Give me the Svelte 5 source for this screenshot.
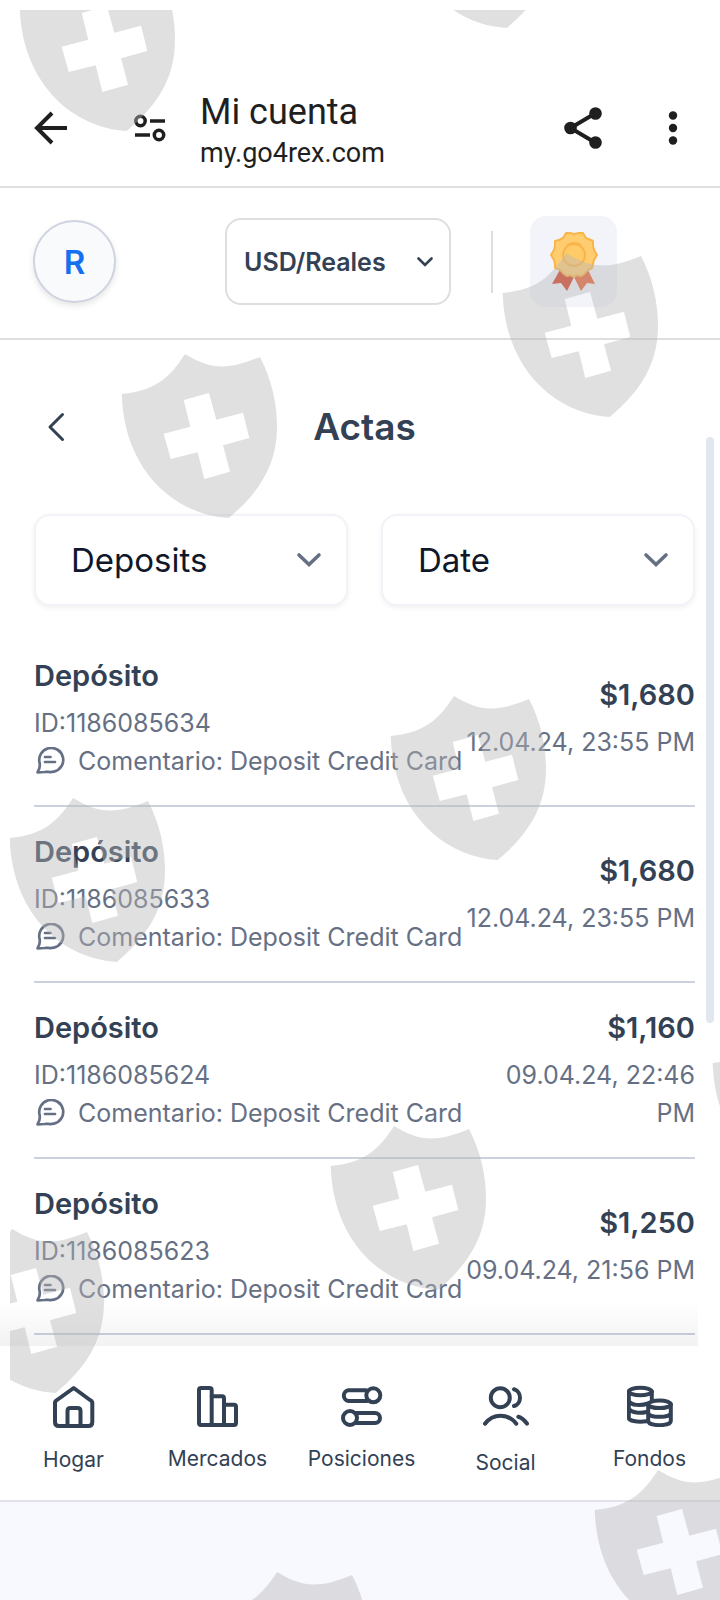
<script>
  let currency = "USD/Reales";
  let type = "Deposits";
  let sortBy = "Date";

  let deposits = [
    { id: "1186085634", amount: "$1,680", date: "12.04.24, 23:55 PM" },
    { id: "1186085633", amount: "$1,680", date: "12.04.24, 23:55 PM" },
    { id: "1186085624", amount: "$1,160", date: "09.04.24, 22:46 PM" },
    { id: "1186085623", amount: "$1,250", date: "09.04.24, 21:56 PM" },
  ];

  // shield positions on the overlay
  const shields = [
    [18, -37], [398, -140], [120, 350], [501, 249], [389, 692], [8, 794],
    [329, 1122], [711, 1019], [-53, 1225], [593, 1466], [212, 1568],
  ];
</script>

<div class="page">
  <header class="browserBar">
    <div class="barGroup">
      <button aria-label="Atrás">
        <svg width="34" height="34" viewBox="0 0 34 34" fill="none" stroke="#1f1f1f" stroke-width="4">
          <path d="M33 17H3M18 2L3 17L18 32" />
        </svg>
      </button>
      <button aria-label="Información del sitio">
        <svg width="34" height="30" viewBox="0 0 34 30" fill="none" stroke="#1f1f1f" stroke-width="3.500">
          <circle cx="6.500" cy="8" r="4.700" />
          <circle cx="25" cy="22" r="4.700" />
          <path d="M16 8H31M1 22H16" />
        </svg>
      </button>
    </div>
    <div class="site">
      <p class="siteTitle">Mi cuenta</p>
      <p class="siteUrl">my.go4rex.com</p>
    </div>
    <div class="barGroup">
      <button aria-label="Compartir">
        <svg width="38" height="42" viewBox="0 0 38 42" fill="#1f1f1f">
          <path d="M31 6.500L6.500 21L31 35.500" fill="none" stroke="#1f1f1f" stroke-width="4" />
          <circle cx="6.500" cy="21" r="6.300" />
          <circle cx="31.500" cy="6.500" r="6.300" />
          <circle cx="31.500" cy="35.500" r="6.300" />
        </svg>
      </button>
      <button aria-label="Más opciones">
        <svg width="10" height="34" viewBox="0 0 10 34" fill="#1f1f1f">
          <circle cx="5" cy="4.500" r="4.200" />
          <circle cx="5" cy="17" r="4.200" />
          <circle cx="5" cy="29.500" r="4.200" />
        </svg>
      </button>
    </div>
  </header>

  <div class="accountBar">
    <button class="avatar">R</button>
    <div class="selectBox currency">
      <select bind:value={currency} aria-label="Moneda">
        <option>USD/Reales</option>
      </select>
      <svg width="16" height="10" viewBox="0 0 16 10" fill="none" stroke="#334155" stroke-width="2.600">
        <path d="M1.500 1.500L8 8L14.500 1.500" stroke-linecap="round" />
      </svg>
    </div>
    <span class="separator"></span>
    <button class="medal" aria-label="Premios">
      <svg width="48" height="60" viewBox="0 0 48 60">
        <path d="M11 36L2 52L11 51L17 59L24 45Z" fill="#d63a1e" />
        <path d="M37 36L45 52L37 51L31 59L24 45Z" fill="#eb6034" />
        <path
          d="M24 2L29 1L33 1L36 6L41 8L43 9L43 14L44 18L47 23L44 28L43 32L42 36L38 38L34 42L31 44L27 43L24 45L20 43L17 44L14 42L10 38L5 36L5 32L4 28L1 23L4 18L5 14L5 9L9 8L13 6L16 1L20 1Z"
          fill="#ffcd70" stroke="#f9b548" stroke-width="2" stroke-linejoin="round" />
        <circle cx="24" cy="23" r="11" fill="#ffca68" stroke="#f9b548" stroke-width="2" />
        <path d="M17 13Q24 9 31 13" fill="none" stroke="#f9b548" stroke-width="2" />
      </svg>
    </button>
  </div>

  <main>
    <div class="titleRow">
      <button aria-label="Volver">
        <svg width="18" height="30" viewBox="0 0 18 30" fill="none" stroke="#334155" stroke-width="3">
          <path d="M15.500 2.500L3 15L15.500 27.500" stroke-linecap="round" stroke-linejoin="round" />
        </svg>
      </button>
      <h1>Actas</h1>
    </div>

    <div class="filters">
      <div class="selectBox filter">
        <select bind:value={type} aria-label="Tipo">
          <option>Deposits</option>
        </select>
        <svg width="26" height="16" viewBox="0 0 26 16" fill="none" stroke="#667085" stroke-width="3.600">
          <path d="M3 3L13 12.500L23 3" stroke-linecap="round" />
        </svg>
      </div>
      <div class="selectBox filter">
        <select bind:value={sortBy} aria-label="Ordenar">
          <option>Date</option>
        </select>
        <svg width="26" height="16" viewBox="0 0 26 16" fill="none" stroke="#667085" stroke-width="3.600">
          <path d="M3 3L13 12.500L23 3" stroke-linecap="round" />
        </svg>
      </div>
    </div>

    <ul>
      {#each deposits as deposit}
        <li>
          <div class="info">
            <h2>Depósito</h2>
            <p>ID:{deposit.id}</p>
            <p class="comment">
              <svg width="30" height="28" viewBox="0 0 30 28" fill="none" stroke="#667085" stroke-width="2.700" stroke-linecap="round" stroke-linejoin="round">
                <path d="M3.500 15.500A12 12 0 1 1 18 24.600C13 25.800 12 24.300 8.500 25L1.500 25.300C3.500 22.500 4.500 20 3.500 15.500Z" />
                <path d="M9 10H14.500M9 15H19" />
              </svg>
              Comentario: Deposit Credit Card
            </p>
          </div>
          <div class="amount">
            <h2>{deposit.amount}</h2>
            <p>{deposit.date}</p>
          </div>
        </li>
      {/each}
    </ul>
    <div class="fade"></div>
    <div class="scrollThumb"></div>
  </main>

  <nav>
    <a href="#hogar">
      <svg width="42" height="43" viewBox="0 0 42 43">
        <path d="M2 18Q2 16 4 15L20.700 3L37 15Q39.300 16 39.300 18V37Q39.300 41 35.500 41H6Q2 41 2 37Z" />
        <path d="M14.500 41V26Q14.500 23 17.500 23H24.500Q27.500 23 27.500 26V41" />
      </svg>
      Hogar
    </a>
    <a href="#mercados">
      <svg width="42" height="42" viewBox="0 -1 42 42">
        <path d="M2 4Q2 2 4 2H12.500Q14.700 2 14.700 4V39H4Q2 39 2 37Z" />
        <path d="M14.700 10.300H25Q27 10.300 27 12.300V39H14.700" />
        <path d="M27 18.700H37Q39 18.700 39 20.700V37Q39 39 37 39H27" />
      </svg>
      Mercados
    </a>
    <a href="#posiciones">
      <svg width="42" height="42" viewBox="0 -1 42 42">
        <path d="M25 4.300H7.500A5.400 5.400 0 0 0 7.500 15H26" />
        <circle cx="32.300" cy="9.300" r="7" />
        <path d="M15 27H34A5 5 0 0 1 34 37H15" />
        <circle cx="9" cy="32" r="7" />
      </svg>
      Posiciones
    </a>
    <a href="#social">
      <svg width="46" height="46" viewBox="0 -1 46 46">
        <circle cx="17.300" cy="11.700" r="9.500" />
        <path d="M31 3.300C39 5.500 39 18 31 20M2 37.700C10 27 25 27 33.300 37.700M35.300 30.700Q40 32 44 37.700" />
      </svg>
      Social
    </a>
    <a href="#fondos">
      <svg width="46" height="42" viewBox="0 -1 46 42">
        <ellipse cx="13.300" cy="5.500" rx="11.500" ry="3.800" />
        <path d="M1.800 5.500V32C1.800 34.500 9 36.500 19.500 35.300M24.800 5.500V13M1.800 15C4 19.500 14 20 21 17.500M1.800 23C5 27 13 27.500 19.500 26" />
        <ellipse cx="32.500" cy="18.300" rx="11.300" ry="3.800" />
        <path d="M21.200 18.300V35C21.200 40.500 43.800 40.500 43.800 35V18.300M21.200 27C21.200 32 43.800 32 43.800 27" />
      </svg>
      Fondos
    </a>
  </nav>

  <div class="shields" aria-hidden="true">
    <svg width="100%" height="100%">
      <g transform="translate(-10 -10)">
        {#each shields as [x, y]}
          <path
            transform="translate({x} {y})"
            fill-rule="evenodd"
            d="M1.700 44C34 41 49 29 65 4C90 19 106 21 140 7C152 30 157 54 157 77C157 115 139 143 108.700 168C56 165 4 122 1.700 44ZM63.700 50L89 43L96.300 69.700L123 62.700L129.300 88L103 95.300L110 121.700L84.300 129L77.700 102.300L50.700 109L43.700 83.700L70.300 76.700Z" />
        {/each}
      </g>
    </svg>
  </div>
</div>

<style>
  :global(body) {
    background: #f8f8ff;
  }

  .page {
    position: relative;
    min-height: 100vh;
    overflow: hidden;
    font-family: Inter, "Liberation Sans", sans-serif;
    color: #334155;
  }

  h1, h2, p, ul {
    margin: 0;
    padding: 0;
  }
  button {
    padding: 0;
    border: none;
    background: none;
    color: inherit;
    font-family: inherit;
    cursor: pointer;
  }
  svg {
    display: block;
    flex: none;
  }

  .browserBar {
    display: flex;
    align-items: center;
    gap: 32px;
    padding: 84px 42px 14px 34px;
    background: #fff;
    border-bottom: 2px solid #e0e0e0;
    font-family: Roboto, sans-serif;
    color: #1f1f1f;
  }
  .barGroup {
    display: flex;
    align-items: center;
    gap: 66px;
  }
  .site {
    flex: 1;
    padding-top: 6px;
  }
  .siteTitle {
    font-size: 36px;
    line-height: 44px;
  }
  .siteUrl {
    font-size: 27px;
    line-height: 38px;
  }

  .accountBar {
    display: flex;
    align-items: center;
    padding: 28px 33px 31px;
    background: #fff;
    border-bottom: 2px solid #dedede;
  }
  .avatar {
    width: 83px;
    height: 83px;
    margin-right: 109px;
    border: 2px solid #d0d4e0;
    border-radius: 50%;
    background: #f9fafc;
    box-shadow: 0 3px 6px rgba(0, 0, 0, 0.1);
    color: #1570ef;
    font-size: 33px;
    font-weight: 600;
  }
  .separator {
    width: 2px;
    height: 62px;
    margin: 0 37px 0 40px;
    background: #dedede;
  }
  .medal {
    display: flex;
    justify-content: center;
    width: 87px;
    height: 91px;
    padding-top: 16px;
    border-radius: 16px;
    background: #f2f4f9;
  }

  .selectBox {
    display: grid;
    align-items: center;
  }
  .selectBox select,
  .selectBox svg {
    grid-area: 1 / 1;
  }
  .selectBox svg {
    justify-self: end;
    pointer-events: none;
  }
  .selectBox select {
    appearance: none;
    width: 100%;
    margin: 0;
    border-radius: 16px;
    background: #fff;
    font-family: inherit;
  }
  .currency {
    width: 226px;
  }
  .currency select {
    height: 87px;
    padding: 0 17px;
    border: 2px solid #dedede;
    color: #334155;
    font-size: 25px;
    font-weight: 600;
  }
  .currency svg {
    margin-right: 18px;
  }

  main {
    position: relative;
    padding: 60px 25px 11px 34px;
    background: #fff;
  }
  .titleRow {
    display: grid;
    grid-template-columns: 1fr auto 1fr;
    align-items: center;
    padding-left: 13px;
    padding-right: 13px;
  }
  h1 {
    font-size: 37px;
    font-weight: 600;
    line-height: 54px;
  }
  .filters {
    display: grid;
    grid-template-columns: 1fr 1fr;
    gap: 33px;
    margin: 60px 0 25px;
  }
  .filter select {
    height: 92px;
    padding: 0 35px;
    border: 2px solid #f2f3f9;
    box-shadow: 0 2px 5px rgba(0, 0, 0, 0.06);
    color: #0f172a;
    font-size: 33px;
  }
  .filter svg {
    margin-right: 26px;
  }

  ul {
    list-style: none;
  }
  li {
    display: flex;
    align-items: center;
    padding: 26px 0 25px;
    border-bottom: 2px solid #cbd2de;
  }
  h2 {
    margin-bottom: 9px;
    font-size: 29px;
    font-weight: 600;
    line-height: 38px;
  }
  li p {
    font-size: 25px;
    line-height: 38px;
    color: #667085;
  }
  .info {
    flex: none;
  }
  .comment {
    display: flex;
    align-items: center;
    gap: 12px;
    padding-left: 2px;
    white-space: nowrap;
  }
  .amount {
    flex: 1;
    text-align: right;
  }

  .fade {
    position: absolute;
    left: 0;
    right: 22px;
    bottom: 0;
    height: 44px;
    background: linear-gradient(rgba(0, 0, 0, 0), rgba(0, 0, 0, 0.05));
  }
  .scrollThumb {
    position: absolute;
    top: 97px;
    right: 6px;
    width: 8px;
    height: 586px;
    border-radius: 4px;
    background: #e2e6ef;
  }

  nav {
    display: grid;
    grid-template-columns: repeat(5, 1fr);
    padding: 39px 0 23px;
    background: #fff;
    border-bottom: 2px solid #e2e1ec;
  }
  nav a {
    display: flex;
    flex-direction: column;
    align-items: center;
    gap: 18px;
    padding-left: 3px;
    color: #334155;
    font-size: 21px;
    line-height: 28px;
    text-decoration: none;
  }
  nav svg {
    fill: none;
    stroke: #334155;
    stroke-width: 4;
    stroke-linecap: round;
    stroke-linejoin: round;
  }

  .shields {
    position: absolute;
    inset: 10px 0 0 10px;
    overflow: hidden;
    pointer-events: none;
  }
  .shields path {
    fill: rgba(183, 183, 183, 0.43);
  }
</style>
